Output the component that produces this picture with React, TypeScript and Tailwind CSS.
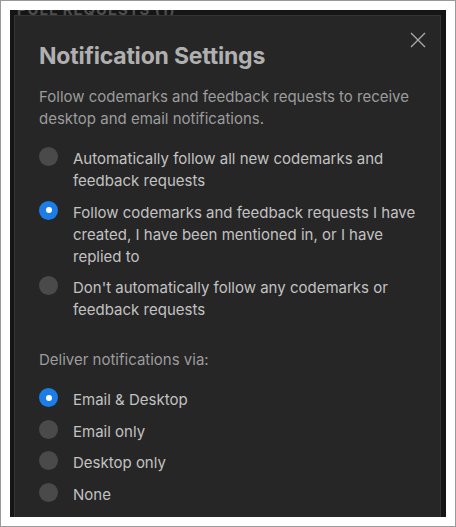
import React, { useState } from 'react';

const followOptions = [
  { id: 'all', label: 'Automatically follow all new codemarks and feedback requests' },
  {
    id: 'involved',
    label: 'Follow codemarks and feedback requests I have created, I have been mentioned in, or I have replied to',
  },
  { id: 'none', label: "Don't automatically follow any codemarks or feedback requests" },
];

const deliveryOptions = [
  { id: 'both', label: 'Email & Desktop' },
  { id: 'email', label: 'Email only' },
  { id: 'desktop', label: 'Desktop only' },
  { id: 'off', label: 'None' },
];

const Radio: React.FC<{ checked: boolean }> = ({ checked }) => (
  <span
    className={`mt-[-1px] flex h-[19px] w-[19px] shrink-0 items-center justify-center rounded-full ${
      checked ? 'bg-[#1b7ee8]' : 'bg-[#4a4a4a]'
    }`}
  >
    {checked && <span className="h-[6px] w-[6px] rounded-full bg-white" />}
  </span>
);

const App: React.FC = () => {
  const [follow, setFollow] = useState('involved');
  const [delivery, setDelivery] = useState('both');

  return (
    <div
      className="h-[527px] w-[456px] border border-[#9a9a9a] bg-white px-[9px] pt-[9px]"
      style={{ fontFamily: 'Inter, "Noto Sans", sans-serif' }}
    >
      <div className="relative h-[507px] overflow-hidden bg-[#151515]">
        {/* panel behind the modal */}
        <div className="mt-[-11px] pl-[7px] text-[15px] font-bold uppercase tracking-[0.06em] text-[#4d4d4d]">
          Pull Requests (1)
        </div>

        {/* Modal */}
        <div className="absolute left-[4px] right-[5px] top-[5px] bottom-0 border border-[#343434] border-b-0 bg-[#262626] px-[24px] pt-[26px]">
          <button className="absolute right-[14px] top-[16px] text-[#a8a8a8]">
            <svg width="16" height="16" viewBox="0 0 16 16" fill="none" stroke="currentColor" strokeWidth="1.4">
              <path d="M1 1l14 14M15 1L1 15" />
            </svg>
          </button>

          <h1 className="text-[23px] font-bold leading-[28px] tracking-[-0.2px] text-[#b0b0b0]">
            Notification Settings
          </h1>

          <p className="mt-[16px] text-[15px] leading-[21.5px] text-[#9c9c9c]">
            Follow codemarks and feedback requests to receive desktop and email notifications.
          </p>

          <div className="mt-[19px] flex flex-col gap-[9.5px]">
            {followOptions.map(o => (
              <label key={o.id} className="flex cursor-pointer gap-[15px]" onClick={() => setFollow(o.id)}>
                <Radio checked={follow === o.id} />
                <span className="text-[15px] leading-[22px] text-[#c2c2c2]">{o.label}</span>
              </label>
            ))}
          </div>

          <div className="mt-[28px] text-[15px] leading-[22px] text-[#9c9c9c]">Deliver notifications via:</div>

          <div className="mt-[18px] flex flex-col gap-[9.6px]">
            {deliveryOptions.map(o => (
              <label key={o.id} className="flex cursor-pointer gap-[15px]" onClick={() => setDelivery(o.id)}>
                <Radio checked={delivery === o.id} />
                <span className="text-[15px] leading-[22px] text-[#c2c2c2]">{o.label}</span>
              </label>
            ))}
          </div>
        </div>
      </div>
    </div>
  );
};

export default App;
